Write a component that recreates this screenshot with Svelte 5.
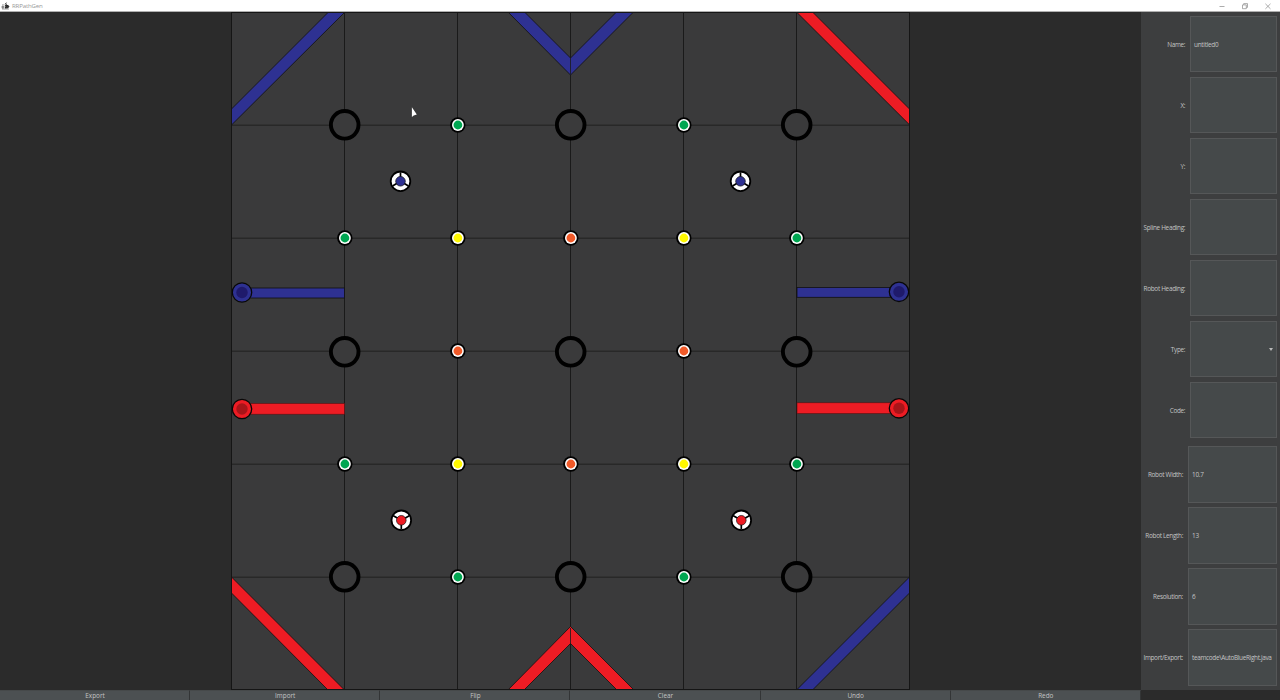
<script>
  const pathFields = [
    { label: 'Name:', value: 'untitled0' },
    { label: 'X:', value: '' },
    { label: 'Y:', value: '' },
    { label: 'Spline Heading:', value: '' },
    { label: 'Robot Heading:', value: '' },
    { label: 'Type:', value: '', select: true },
    { label: 'Code:', value: '' }
  ];
  const robotFields = [
    { label: 'Robot Width:', value: '10.7' },
    { label: 'Robot Length:', value: '13' },
    { label: 'Resolution:', value: '6' },
    { label: 'Import/Export:', value: 'teamcode\\AutoBlueRight.java', fit: true }
  ];
  const actions = ['Export', 'Import', 'Flip', 'Clear', 'Undo', 'Redo'];

  const cols = [344.5, 457.5, 570.5, 683.5, 796.5];
  const rows = [125, 238, 351, 464, 577];
  const grounds = [125, 352, 577].flatMap((y) => [344.5, 570.5, 796.5].map((x) => [x, y]));
  const green = '#00a651';
  const yellow = '#fff800';
  const orange = '#f15a29';
  const junctions = [
    [458, 125, green], [684, 125, green],
    [345, 238, green], [458, 238, yellow], [571, 238, orange], [684, 238, yellow], [797, 238, green],
    [458, 351, orange], [684, 351, orange],
    [345, 464, green], [458, 464, yellow], [571, 464, orange], [684, 464, yellow], [797, 464, green],
    [458, 577, green], [684, 577, green]
  ];
  const cones = [
    [400.5, 181.3, '#2e3192', 0], [740.5, 181.3, '#2e3192', 0],
    [401.3, 520.3, '#ed1c24', 180], [741.3, 520.3, '#ed1c24', 180]
  ];
  const stacks = [
    [242, 292.5, '#2e3192', '#1f1a6b'], [899, 291.8, '#2e3192', '#1f1a6b'],
    [242, 409, '#ed1c24', '#a81519'], [899, 408.3, '#ed1c24', '#a81519']
  ];
</script>

<div class="window">
  <header>
    <svg class="logo" viewBox="0 0 9 9" width="9" height="9">
      <path d="M1.2 3.8h1.6M1 5h1.5v2.2H1zM1 8h7" stroke="#888" fill="#888" stroke-width=".8" />
      <path d="M4.2 3.4 5.4 1.7M3.8 5.2 5.5 3.2M5.7 4 8 5.3 7 6.8 4 7z" stroke="#222" fill="#333" stroke-width="1" />
    </svg>
    <span class="title">RRPathGen</span>
    <div class="controls">
      <svg width="6" height="8" viewBox="0 0 6 8"><path d="M.5 4.5h5" stroke="#888" stroke-width=".7" /></svg>
      <svg width="6" height="8" viewBox="0 0 6 8"><path d="M.5 2.9h3.8v3.8H.5zM1.7 2.8V1.6h3.8v3.8H4.4" fill="none" stroke="#888" stroke-width=".7" /></svg>
      <svg width="6" height="8" viewBox="0 0 6 8"><path d="m.4 1.8 5.1 5.1m0-5.1L.4 6.9" stroke="#888" stroke-width=".7" /></svg>
    </div>
  </header>

  <main>
    <div class="stage">
      <svg class="field" viewBox="231 12 679 678" width="679" height="678">
        <rect x="231" y="12" width="679" height="678" fill="#3a3a3b" />
        {#each rows as y}
          <path d="M231 {y + 0.2}h679" stroke="#282828" stroke-width="1.5" />
        {/each}
        {#each cols as x}
          <path d="M{x} 12v678" stroke="#1a1a1a" stroke-width="1" />
        {/each}

        <g stroke="#111" stroke-width=".8">
          <path d="M231.5 109 330.5 10h16.5L231.5 125z" fill="#2e3192" />
          <path d="M506 10h16.5l48 48L618.5 10h17L570.5 75z" fill="#2e3192" />
          <path d="M794.5 10h16L909.5 109V124.8z" fill="#ed1c24" />
          <path d="M231.5 577 346.5 692H330L231.5 593z" fill="#ed1c24" />
          <path d="M506.5 691.5h16l48-48 48 48H635.5L570.5 626.5z" fill="#ed1c24" />
          <path d="M909.5 577 794.5 692H810.5L909.5 593z" fill="#2e3192" />
          <rect x="242" y="288" width="102.5" height="10" fill="#2e3192" />
          <rect x="797" y="287.5" width="102" height="9.8" fill="#2e3192" />
        </g>
        <g stroke="#5a1012" stroke-width=".6">
          <rect x="242" y="403.5" width="102.5" height="10.7" fill="#ed1c24" />
          <rect x="797" y="402.8" width="102" height="10.7" fill="#ed1c24" />
        </g>
        <path d="M570.5 57v17M570.5 628v16" stroke="#1a1a1a" stroke-width=".8" />

        {#each grounds as [x, y]}
          <circle cx={x + 0.2} cy={y - 0.2} r="13.8" fill="#3a3a3b" stroke="#000" stroke-width="3.9" />
        {/each}
        {#each junctions as [x, y, fill]}
          <circle cx={x - 0.2} cy={y} r="7.7" fill="#000" />
          <circle cx={x - 0.1} cy={y} r="5.9" fill="#fff" />
          <circle cx={x - 0.1} cy={y} r="4.4" {fill} />
        {/each}
        {#each cones as [x, y, fill, turn]}
          <g transform="translate({x} {y}) rotate({turn})">
            <circle r="9.8" fill="#fff" stroke="#000" stroke-width="1.8" />
            <path d="M0 0v-9M0 0l-8 4.6M0 0l8 4.6" stroke="#000" stroke-width="1.7" />
            <circle r="4.8" {fill} stroke="#111" stroke-width=".7" />
          </g>
        {/each}
        {#each stacks as [x, y, fill, core]}
          <circle cx={x} cy={y} r="9.7" {fill} stroke="#080808" stroke-width="1.3" />
          <circle cx={x} cy={y} r="5.7" fill={core} />
        {/each}
        <rect x="231.5" y="12.5" width="678" height="677" fill="none" stroke="#151515" />
        <path d="M411.9 107.3v9.6l1.8-1.5 3.1-.9z" fill="#fff" />
      </svg>
    </div>

    <aside>
      <div class="group">
        {#each pathFields as f}
          <div class="row">
            <span class="label">{f.label}</span>
            <div class="box">
              <span>{f.value}</span>
              {#if f.select}<i class="caret"></i>{/if}
            </div>
          </div>
        {/each}
      </div>
      <div class="group robot">
        {#each robotFields as f}
          <div class="row">
            <span class="label">{f.label}</span>
            <div class="box"><span class:fit={f.fit}>{f.value}</span></div>
          </div>
        {/each}
      </div>
    </aside>
  </main>

  <footer>
    {#each actions as a}
      <div class="action">{a}</div>
    {/each}
  </footer>
</div>

<style>
  :global(body) {
    margin: 0;
    overflow: hidden;
  }
  .window {
    width: 1280px;
    height: 700px;
    display: flex;
    flex-direction: column;
    background: #2b2b2b;
    font: 6.4px/8px 'Open Sans', 'Noto Sans', sans-serif;
    color: #c4c4c4;
  }
  header {
    box-sizing: border-box;
    height: 12px;
    flex: none;
    display: flex;
    align-items: center;
    background: #fff;
    border-bottom: 1px solid #b0b0b0;
    padding: 0 9px 0 1px;
  }
  .title {
    color: #999;
    margin-left: 2px;
    font-size: 6.1px;
    letter-spacing: -0.17px;
  }
  .controls {
    margin-left: auto;
    display: flex;
    gap: 17px;
  }
  svg {
    display: block;
  }
  main {
    display: flex;
    height: 678px;
  }
  .stage {
    width: 1141px;
    display: flex;
    justify-content: center;
  }
  aside {
    box-sizing: border-box;
    width: 139px;
    background: #3d3e3f;
    padding: 3.6px 3px 0 0;
  }
  .group {
    display: flex;
    flex-direction: column;
    gap: 4px;
  }
  .robot {
    margin-top: 7.6px;
  }
  .row {
    height: 57px;
    display: flex;
    align-items: center;
  }
  .label {
    width: 44.2px;
    flex: none;
    margin-right: 4.8px;
    display: flex;
    justify-content: flex-end;
    white-space: nowrap;
    letter-spacing: -0.31px;
    padding-top: 1px;
  }
  .box {
    box-sizing: border-box;
    flex: 1;
    min-width: 0;
    height: 56.6px;
    display: flex;
    align-items: center;
    justify-content: space-between;
    padding: 1px 3px 0;
    background: #45494a;
    border: 1px solid #555758;
    white-space: nowrap;
    letter-spacing: -0.26px;
  }
  .robot .label {
    width: 42px;
    margin-right: 5px;
  }
  .fit {
    letter-spacing: -0.32px;
  }
  .caret {
    border: 2.5px solid transparent;
    border-top: 3px solid #bbb;
    border-bottom: 0;
  }
  footer {
    height: 10px;
    width: 1141px;
    display: grid;
    grid-template-columns: repeat(6, 190.15px);
  }
  .action {
    box-sizing: border-box;
    height: 10px;
    border-right: 1px solid #333536;
    background: #4c5052;
    border-top: 1px solid #46494a;
    text-align: center;
    line-height: 9px;
    padding-left: 1px;
  }
</style>
